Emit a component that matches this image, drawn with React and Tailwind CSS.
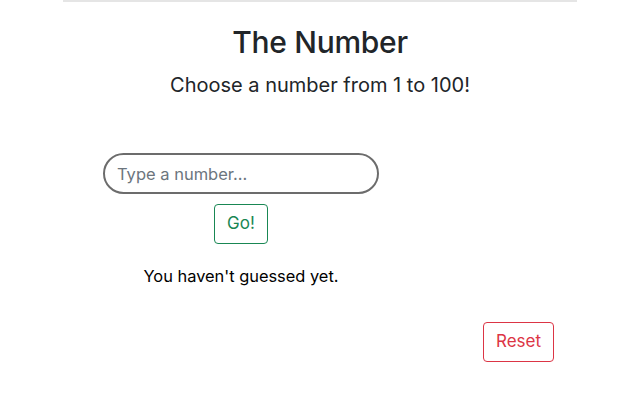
import React, { useState } from 'react';

function App() {
  const [guess, setGuess] = useState('');
  const [message, setMessage] = useState("You haven't guessed yet.");

  return (
    <div className="w-full min-h-[400px] bg-white text-[#212529]" style={{ fontFamily: 'Inter, "Noto Sans", sans-serif' }}>
      <div className="mx-auto w-[514px] border-t-2 border-[#e5e5e5]">
        <h1 className="mt-[20px] text-center text-[30px] leading-[40px] font-medium tracking-[-0.01em]">The Number</h1>
        <p className="mt-[9px] text-center text-[20px] leading-[28px]">Choose a number from 1 to 100!</p>

        <div className="mt-[54px] flex w-[356px] flex-col items-center">
          <input
            type="text"
            value={guess}
            onChange={(e) => setGuess(e.target.value)}
            placeholder="Type a number..."
            className="h-[41px] w-[276px] rounded-full border-2 border-[#6c6c6c] px-[12px] text-[16.5px] outline-none placeholder:text-[#6c757d]"
          />
          <button
            onClick={() => setMessage(guess ? `You guessed ${guess}.` : "You haven't guessed yet.")}
            className="mt-[10px] h-[40px] w-[54px] rounded-[4px] border border-[#198754] text-[17px] text-[#198754]"
          >
            Go!
          </button>
          <p className="mt-[20px] text-[16.4px] leading-[24px] text-black">{message}</p>
        </div>

        <div className="mt-[34px] flex justify-end pr-[23px]">
          <button
            onClick={() => { setGuess(''); setMessage("You haven't guessed yet."); }}
            className="h-[40px] w-[71px] rounded-[4px] border border-[#dc3545] text-[17px] text-[#dc3545]"
          >
            Reset
          </button>
        </div>
      </div>
    </div>
  );
}

export default App;
